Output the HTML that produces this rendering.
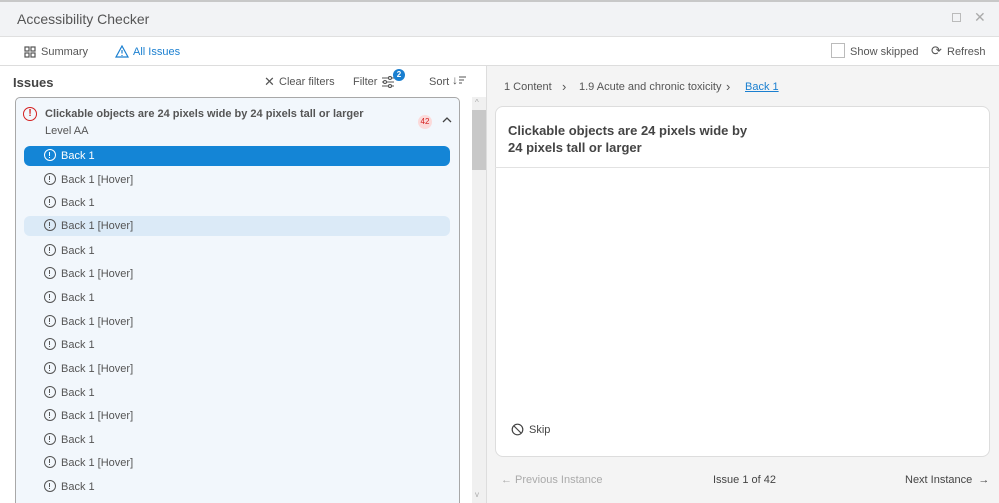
<!DOCTYPE html>
<html><head><style>
*{box-sizing:border-box;margin:0;padding:0}
html,body{width:999px;height:503px;overflow:hidden}
body{font-family:"Liberation Sans",sans-serif;font-size:11px;color:#444;background:#fff;position:relative}
.a{position:absolute}
.ic{display:inline-block;width:12px;height:12px;border:1.3px solid #555;border-radius:50%;position:relative;vertical-align:middle}
.ic:before{content:"";position:absolute;left:4px;top:1.5px;width:1.4px;height:4.5px;background:#555}
.ic:after{content:"";position:absolute;left:4px;top:7px;width:1.4px;height:1.4px;background:#555}
.row{position:absolute;left:24px;width:426px;height:20px;border-radius:6px;padding-left:20px;line-height:21px;color:#555}
.row .ic{margin-right:5px;margin-top:-2px}
.sel{background:#1485d6;color:#fff}
.sel .ic{border-color:#fff}.sel .ic:before,.sel .ic:after{background:#fff}
.hov{background:#dbeaf7}
</style></head><body>
<div class="a" style="left:0;top:0;width:999px;height:2px;background:#c8c8c8"></div>
<div class="a" style="left:0;top:2px;width:999px;height:35px;background:#f2f3f5;border-bottom:1px solid #e0e0e0"></div>
<div class="a" style="left:17px;top:11px;font-size:14px;color:#555">Accessibility Checker</div>
<div class="a" style="left:952px;top:13px;width:9px;height:9px;border:1px solid #bbb"></div>
<div class="a" style="left:974px;top:9px;font-size:14px;color:#aaa">✕</div>
<div class="a" style="left:0;top:65px;width:999px;height:1px;background:#ddd"></div>
<svg class="a" style="left:24px;top:46px" width="12" height="12"><g fill="none" stroke="#555" stroke-width="1.2"><rect x="1" y="1" width="4" height="4"/><rect x="7" y="1" width="4" height="4"/><rect x="1" y="7" width="4" height="4"/><rect x="7" y="7" width="4" height="4"/></g></svg>
<div class="a" style="left:41px;top:46px;color:#555">Summary</div>
<svg class="a" style="left:115px;top:45px" width="14" height="13"><path d="M7 1L13 12H1Z M7 5v3.5 M7 10v1" fill="none" stroke="#1a7fd0" stroke-width="1.2"/></svg>
<div class="a" style="left:133px;top:46px;color:#1a7fd0">All Issues</div>
<div class="a" style="left:831px;top:43px;width:14px;height:15px;border:1px solid #bbb;background:#fff"></div>
<div class="a" style="left:850px;top:46px;color:#555">Show skipped</div>
<div class="a" style="left:931px;top:43px;font-size:13px;color:#555">⟳</div>
<div class="a" style="left:947px;top:46px;color:#555">Refresh</div>
<!-- left -->
<div class="a" style="left:13px;top:75px;font-size:13px;font-weight:bold;color:#444">Issues</div>
<div class="a" style="left:264px;top:74px;font-size:13px;color:#555">✕</div>
<div class="a" style="left:279px;top:76px;color:#555">Clear filters</div>
<div class="a" style="left:353px;top:76px;color:#555">Filter</div>
<svg class="a" style="left:381px;top:76px" width="14" height="12"><g stroke="#555" stroke-width="1.1" fill="#fff"><path d="M1 2h12M1 6h12M1 10h12"/><circle cx="9" cy="2" r="1.5"/><circle cx="4" cy="6" r="1.5"/><circle cx="9" cy="10" r="1.5"/></g></svg>
<div class="a" style="left:393px;top:69px;width:12px;height:12px;border-radius:50%;background:#1a7fd0;color:#fff;font-size:8px;font-weight:bold;text-align:center;line-height:12px">2</div>
<div class="a" style="left:429px;top:76px;color:#555">Sort</div>
<div class="a" style="left:452px;top:73px;font-size:12px;color:#555">↓</div>
<svg class="a" style="left:458px;top:76px" width="9" height="10"><path d="M1 1h7M1 4h5M1 7h3" stroke="#555" stroke-width="1.1"/></svg>
<div class="a" style="left:15px;top:97px;width:445px;height:420px;background:#f2f7fc;border:1px solid #a8a8a8;border-radius:5px"></div>
<div class="a" style="left:23px;top:107px;width:14px;height:14px;border:1.6px solid #d42020;border-radius:50%;color:#d42020;font-size:10px;font-weight:bold;text-align:center;line-height:11px">!</div>
<div class="a" style="left:45px;top:108px;font-weight:bold;color:#555">Clickable objects are 24 pixels wide by 24 pixels tall or larger</div>
<div class="a" style="left:45px;top:125px;color:#555">Level AA</div>
<div class="a" style="left:418px;top:115px;width:14px;height:14px;border-radius:50%;background:#fbdada;color:#d42020;font-size:8px;text-align:center;line-height:14px">42</div>
<svg class="a" style="left:442px;top:116px" width="10" height="7"><path d="M1 6L5 2L9 6" fill="none" stroke="#444" stroke-width="1.3"/></svg>
<div class="row sel" style="top:146px"><span class="ic"></span>Back 1</div>
<div class="row" style="top:170px"><span class="ic"></span>Back 1 [Hover]</div>
<div class="row" style="top:193px"><span class="ic"></span>Back 1</div>
<div class="row hov" style="top:216px"><span class="ic"></span>Back 1 [Hover]</div>
<div class="row" style="top:241px"><span class="ic"></span>Back 1</div>
<div class="row" style="top:264px"><span class="ic"></span>Back 1 [Hover]</div>
<div class="row" style="top:288px"><span class="ic"></span>Back 1</div>
<div class="row" style="top:312px"><span class="ic"></span>Back 1 [Hover]</div>
<div class="row" style="top:335px"><span class="ic"></span>Back 1</div>
<div class="row" style="top:359px"><span class="ic"></span>Back 1 [Hover]</div>
<div class="row" style="top:383px"><span class="ic"></span>Back 1</div>
<div class="row" style="top:406px"><span class="ic"></span>Back 1 [Hover]</div>
<div class="row" style="top:430px"><span class="ic"></span>Back 1</div>
<div class="row" style="top:453px"><span class="ic"></span>Back 1 [Hover]</div>
<div class="row" style="top:477px"><span class="ic"></span>Back 1</div>
<div class="a" style="left:472px;top:97px;width:14px;height:406px;background:#f0f0f0"></div>
<div class="a" style="left:472px;top:110px;width:14px;height:60px;background:#c8c8c8"></div>
<div class="a" style="left:475px;top:98px;font-size:8px;color:#aaa">^</div>
<div class="a" style="left:475px;top:490px;font-size:8px;color:#aaa">v</div>
<div class="a" style="left:486px;top:66px;width:1px;height:437px;background:#ddd"></div>
<!-- right -->
<div class="a" style="left:487px;top:66px;width:512px;height:437px;background:#f4f4f4"></div>
<div class="a" style="left:504px;top:81px;color:#555">1 Content</div>
<div class="a" style="left:562px;top:79px;font-size:13px;color:#555">›</div>
<div class="a" style="left:579px;top:81px;color:#555">1.9 Acute and chronic toxicity</div>
<div class="a" style="left:726px;top:79px;font-size:13px;color:#555">›</div>
<div class="a" style="left:745px;top:81px;color:#1a7fd0;text-decoration:underline">Back 1</div>
<div class="a" style="left:495px;top:106px;width:495px;height:351px;background:#fff;border:1px solid #ddd;border-radius:8px"></div>
<div class="a" style="left:495px;top:167px;width:495px;height:1px;background:#e2e2e2"></div>
<div class="a" style="left:508px;top:122px;font-size:13px;font-weight:bold;color:#444;line-height:17px">Clickable objects are 24 pixels wide by<br>24 pixels tall or larger</div>
<svg class="a" style="left:511px;top:423px" width="13" height="13"><circle cx="6.5" cy="6.5" r="5.3" fill="none" stroke="#444" stroke-width="1.2"/><path d="M3 3l7 7" stroke="#444" stroke-width="1.2"/></svg>
<div class="a" style="left:529px;top:424px;color:#444">Skip</div>
<div class="a" style="left:501px;top:474px;color:#aaa">← Previous Instance</div>
<div class="a" style="left:713px;top:474px;color:#444">Issue 1 of 42</div>
<div class="a" style="left:905px;top:474px;color:#444">Next Instance &nbsp;→</div>
</body></html>
